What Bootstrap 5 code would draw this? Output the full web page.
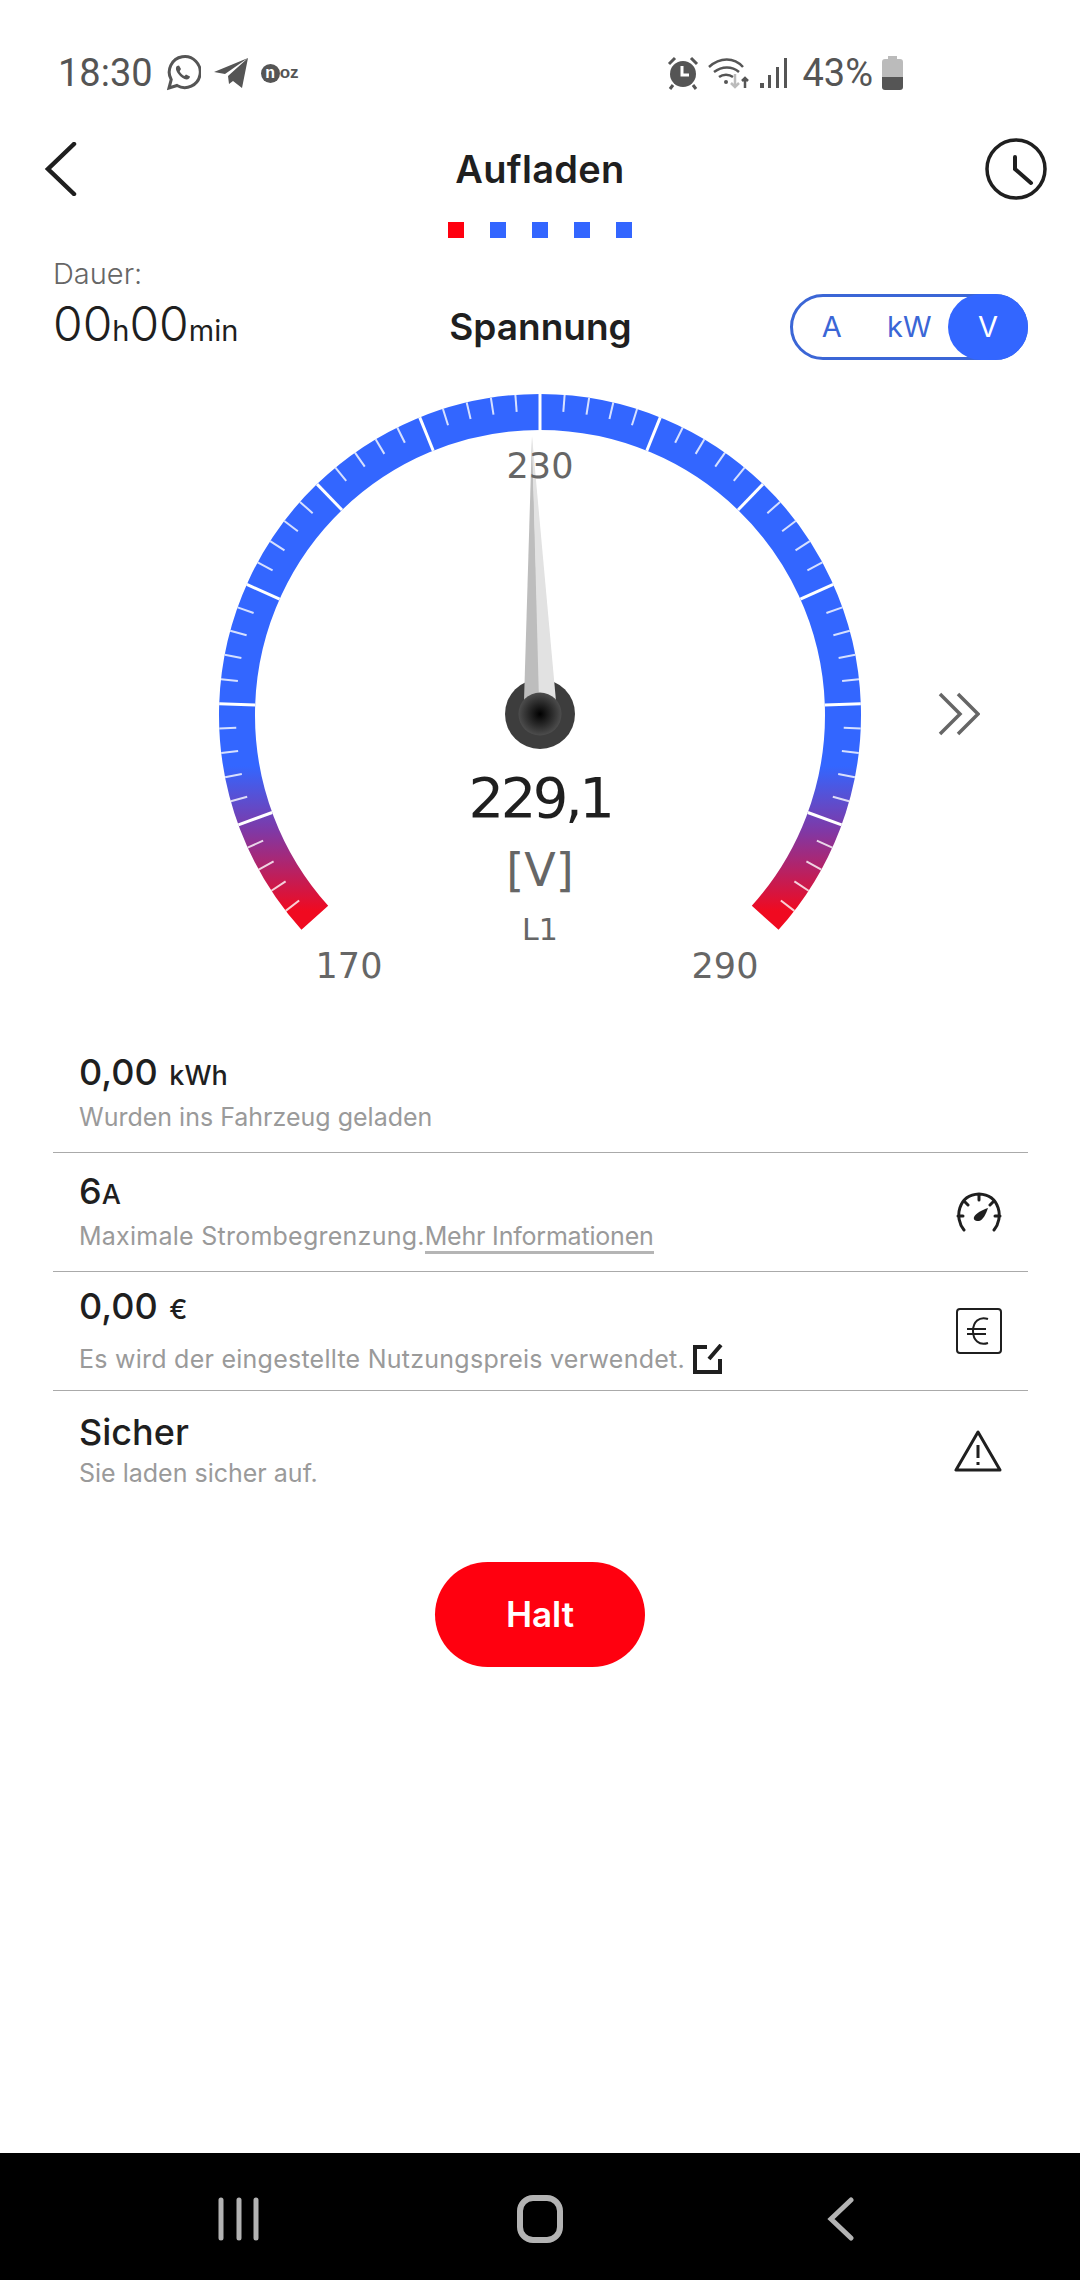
<!DOCTYPE html>
<html lang="de">
<head>
  <meta charset="UTF-8" />
  <meta name="viewport" content="width=device-width, initial-scale=1.0" />
  <title>Aufladen</title>
  <link href="https://cdn.jsdelivr.net/npm/bootstrap@5.3.0/dist/css/bootstrap.min.css" rel="stylesheet">
  <style>
    body {
      font-family: 'Inter', sans-serif;
      background-color: #fff;
      color: #1f1f1f;
      width: 1080px;
      height: 2280px;
      overflow: hidden;
    }
    .phone {
      height: 2280px;
    }
    .status-bar {
      height: 72px;
      margin-top: 37px;
      padding: 0 177px 0 58px;
      font-family: 'Roboto', sans-serif;
      font-size: 38px;
      color: #555;
    }
    .status-left {
      gap: 12px;
    }
    .status-right {
      gap: 9px;
    }
    .noz-logo {
      font-family: 'Liberation Sans', sans-serif;
      font-weight: 700;
      font-size: 17px;
      color: #555;
    }
    .noz-logo b {
      display: inline-flex;
      width: 19px;
      height: 19px;
      border-radius: 50%;
      background: #555;
      color: #fff;
      align-items: center;
      justify-content: center;
      font-size: 16px;
    }
    .top-bar {
      height: 90px;
      margin-top: 15px;
      padding: 0 33px 0 44px;
    }
    .top-slot {
      width: 80px;
    }
    .top-slot.slot-end {
      width: 91px;
    }
    .page-title {
      font-size: 38px;
      font-weight: 600;
      letter-spacing: .3px;
    }
    .step-dot {
      width: 16px;
      height: 16px;
      background: #3366ff;
    }
    .step-dot.active-step {
      background: #ff000f;
    }
    .dot-row {
      gap: 26px;
    }
    .info-bar {
      padding: 6px 52px 0 53px;
      height: 131px;
      margin-top: 12px;
    }
    .info-col {
      width: 238px;
    }
    .dauer-label {
      font-size: 29px;
      line-height: 36px;
      color: #666;
      font-weight: 300;
    }
    .dauer-time {
      font-size: 48px;
      line-height: 64px;
      font-weight: 300;
    }
    .dauer-time small {
      font-size: 29px;
      font-weight: 400;
    }
    .gauge-title {
      margin-top: 38px;
      line-height: 66px;
      font-size: 37px;
      font-weight: 600;
    }
    .unit-switch {
      margin-top: 38px;
      width: 238px;
      height: 66px;
      border: 3px solid #3b66d6;
      font-size: 29px;
      color: #3b66d6;
    }
    .unit-opt {
      flex: 1;
    }
    .unit-opt.unit-on {
      background: #3366ff;
      color: #fff;
      flex: 0 0 80px;
      height: 66px;
      margin: -3px -3px -3px 0;
    }
    .gauge-box {
      height: 640px;
    }
    .gauge-text {
      position: absolute;
      transform: translate(-50%, -50%);
      font-family: 'DejaVu Sans', sans-serif;
      color: #666;
      line-height: 1;
      white-space: nowrap;
    }
    .gauge-scale { font-size: 35px; }
    .gauge-value { font-size: 56px; letter-spacing: -3.500px; color: #1f1f1f; }
    .gauge-unit { font-size: 46px; }
    .gauge-phase { font-size: 30px; }
    .gauge-next {
      position: absolute;
      left: 938px;
      top: 311px;
    }
    .data-list {
      padding: 0 52px 0 53px;
      margin-top: 13px;
    }
    .data-row {
      height: 119px;
      padding: 0 26px;
      border-bottom: 1px solid #aaa;
    }
    .data-row:last-child {
      border-bottom: 0;
    }
    .data-value {
      font-size: 36px;
      line-height: 44px;
      font-weight: 500;
    }
    .data-value small {
      font-size: 27px;
      margin-left: 2px;
    }
    .data-value small.tight {
      margin-left: 0;
    }
    .data-sub {
      font-size: 25px;
      line-height: 38px;
      color: #9a9a9a;
    }
    .data-sub.sub-wide {
      letter-spacing: .25px;
    }
    .more-link {
      color: #9a9a9a;
      letter-spacing: -.2px;
      border-bottom: 3px solid #b5b5b5;
    }
    .halt-wrap {
      margin-top: 52px;
    }
    .halt-btn {
      width: 210px;
      height: 105px;
      background: #ff000f;
      color: #fff;
      border: 0;
      font-size: 35px;
      font-weight: 600;
    }
    .nav-bar {
      height: 127px;
      padding-top: 4px;
      background: #000;
      margin-top: auto;
    }
    .nav-slot {
      width: 301px;
    }
  </style>
</head>
<body>
<div class="phone d-flex flex-column">

  <div class="status-bar d-flex align-items-center justify-content-between">
    <div class="status-left d-flex align-items-center">
      <span>18:30</span>
      <svg width="36" height="36" viewBox="0 0 36 36" fill="none" stroke="#555" stroke-width="3"><path d="M4 33l2.200-8.400A15.500 15.500 0 1 1 12 30.500z"/><path d="M12 11c-1.500 1.500-1.500 4 1 7.500s6 6 8.500 6c2 0 3.500-1.500 3.500-3l-4-2-1.500 1.500c-2-.8-4-3-4.800-4.800L16 14l-2-3.500z" fill="#555" stroke="none"/></svg>
      <svg width="36" height="32" viewBox="0 0 36 32"><path d="M35 1L29 31l-9-7-4 3-1-8zM1 15L35 1 12 17z" fill="#555"/></svg>
      <span class="noz-logo d-flex align-items-center"><b>n</b>oz</span>
    </div>
    <div class="status-right d-flex align-items-center">
      <svg width="32" height="34" viewBox="0 0 32 34"><circle cx="16" cy="18" r="13" fill="#555"/><path d="M15 10v9h7" fill="none" stroke="#fff" stroke-width="3"/><path d="M2 8l6-6M30 8l-6-6M6 29l-3 4M26 29l3 4" stroke="#555" stroke-width="3"/></svg>
      <svg width="42" height="34" viewBox="0 0 42 34" fill="none" stroke="#555" stroke-width="2.500"><path d="M1 11c11-10 25-10 34 0M6 16c8-6 18-6 25 0M11 21c4-3 10-3 14 0"/><circle cx="18" cy="26" r="2" fill="#555" stroke="none"/><path d="M27 18v13M23 27l4 4 4-4" stroke="#bbb"/><path d="M37 32V22M34 25l3-3 3 3"/></svg>
      <svg width="30" height="32" viewBox="0 0 30 32" fill="#555"><rect x="1" y="26" width="4" height="5"/><rect x="9" y="18" width="3" height="13"/><rect x="17" y="10" width="3" height="21"/><rect x="25" y="1" width="3" height="30"/></svg>
      <span class="ms-1">43%</span>
      <svg width="21" height="34" viewBox="0 0 21 34"><path d="M6 0h9v3h3a3 3 0 0 1 3 3v19H0V6a3 3 0 0 1 3-3h3z" fill="#bbb"/><path d="M0 21h21v10a3 3 0 0 1-3 3H3a3 3 0 0 1-3-3z" fill="#555"/></svg>
    </div>
  </div>

  <div class="top-bar d-flex align-items-center justify-content-between">
    <div class="top-slot d-flex">
      <svg width="34" height="54" viewBox="0 0 34 54" fill="none" stroke="#1f1f1f" stroke-width="4.500" stroke-linecap="round"><path d="M30 2L4 27l26 25"/></svg>
    </div>
    <div class="page-title">Aufladen</div>
    <div class="top-slot slot-end d-flex justify-content-end">
      <svg width="62" height="62" viewBox="0 0 62 62" fill="none" stroke="#1f1f1f" stroke-width="3.500"><circle cx="31" cy="31" r="29"/><path d="M30 19v12l16 14" stroke-linecap="round" stroke-width="4"/></svg>
    </div>
  </div>

  <div class="dot-row d-flex justify-content-center mt-2">
    <span class="step-dot active-step"></span>
    <span class="step-dot"></span>
    <span class="step-dot"></span>
    <span class="step-dot"></span>
    <span class="step-dot"></span>
  </div>

  <div class="info-bar d-flex align-items-start justify-content-between">
    <div class="info-col">
      <div class="dauer-label">Dauer:</div>
      <div class="dauer-time">00<small>h</small>00<small>min</small></div>
    </div>
    <div class="gauge-title">Spannung</div>
    <div class="unit-switch d-flex align-items-center rounded-pill">
      <span class="unit-opt text-center">A</span>
      <span class="unit-opt text-center">kW</span>
      <span class="unit-opt unit-on rounded-pill d-flex align-items-center justify-content-center">V</span>
    </div>
  </div>

  <div class="gauge-box position-relative">
    <svg id="gauge" width="1080" height="640" viewBox="0 0 1080 640">
      <defs>
        <linearGradient id="ringFill" gradientUnits="userSpaceOnUse" x1="0" y1="385" x2="0" y2="530">
          <stop offset="0" stop-color="#3366ff"/>
          <stop offset="0.45" stop-color="#8038a5"/>
          <stop offset="1" stop-color="#f00a20"/>
        </linearGradient>
        <radialGradient id="hubFill">
          <stop offset="0" stop-color="#000"/>
          <stop offset="1" stop-color="#4d4d4d"/>
        </radialGradient>
      </defs>
      <path id="ring" fill="none" stroke="url(#ringFill)" stroke-width="36"/>
      <g id="ticks" stroke="#fff"></g>
      <circle cx="540" cy="333" r="35" fill="#3d3d3d"/>
      <path d="M532 55L524 320h16z" fill="#bdbdbd"/>
      <path d="M532 55L539 320h17z" fill="#e2e2e2"/>
      <circle cx="540" cy="333" r="21.500" fill="url(#hubFill)"/>
    </svg>
    <span class="gauge-text gauge-scale" style="left:540px;top:85px">230</span>
    <span class="gauge-text gauge-value" style="left:540px;top:417px">229,1</span>
    <span class="gauge-text gauge-unit" style="left:540px;top:489px">[V]</span>
    <span class="gauge-text gauge-phase" style="left:540px;top:549px">L1</span>
    <span class="gauge-text gauge-scale" style="left:349px;top:585px">170</span>
    <span class="gauge-text gauge-scale" style="left:725px;top:585px">290</span>
    <svg class="gauge-next" width="42" height="44" viewBox="0 0 42 44" fill="none" stroke="#666" stroke-width="3.500"><path d="M2 2l20 20L2 42M20 2l20 20-20 20"/></svg>
  </div>

  <div class="data-list">
    <div class="data-row d-flex align-items-center justify-content-between">
      <div>
        <div class="data-value">0,00 <small>kWh</small></div>
        <div class="data-sub">Wurden ins Fahrzeug geladen</div>
      </div>
    </div>
    <div class="data-row d-flex align-items-center justify-content-between">
      <div>
        <div class="data-value">6<small class="tight">A</small></div>
        <div class="data-sub sub-wide">Maximale Strombegrenzung.<a class="more-link text-decoration-none" href="#">Mehr Informationen</a></div>
      </div>
      <svg width="46" height="40" viewBox="0 0 46 40" fill="none" stroke="#1f1f1f" stroke-width="3"><path d="M8 38C-2 26 2 3 23 2c21 1 25 24 15 36M23 2v6M8 9l4 4M38 9l-4 4M2 24h5M44 24h-5" stroke-linecap="round"/><path d="M18 25c2-4 8-7 14-9-2 6-5 12-9 13-3 .5-6-1-5-4z" fill="#1f1f1f" stroke="none"/></svg>
    </div>
    <div class="data-row d-flex align-items-center justify-content-between">
      <div>
        <div class="data-value">0,00 <small>€</small></div>
        <div class="data-sub sub-wide d-flex align-items-center gap-2 mt-2">Es wird der eingestellte Nutzungspreis verwendet.
          <svg width="30" height="30" viewBox="0 0 30 30" fill="none" stroke="#1f1f1f" stroke-width="4"><path d="M14 3H2v25h25V15M16 15L28 1"/></svg>
        </div>
      </div>
      <svg width="46" height="46" viewBox="0 0 46 46" fill="none" stroke="#1f1f1f" stroke-width="2"><rect x="1" y="1" width="44" height="44" rx="3"/><path d="M32 11c-9-3-15 3-15 12s6 15 15 12M11 21h19M11 26h19"/></svg>
    </div>
    <div class="data-row d-flex align-items-center justify-content-between">
      <div>
        <div class="data-value">Sicher</div>
        <div class="data-sub">Sie laden sicher auf.</div>
      </div>
      <svg width="48" height="44" viewBox="0 0 48 44" fill="none" stroke="#1f1f1f" stroke-width="3" stroke-linejoin="round"><path d="M24 3L2 41h44z"/><path d="M24 16v13M24 33v3"/></svg>
    </div>
  </div>

  <div class="halt-wrap text-center">
    <button class="btn halt-btn rounded-pill">Halt</button>
  </div>

  <div class="nav-bar d-flex align-items-center justify-content-center">
    <div class="nav-slot text-center">
      <svg width="44" height="44" viewBox="0 0 44 44" stroke="#b3b3b3" stroke-width="5" stroke-linecap="round"><path d="M4 3v38M22 3v38M39 3v38"/></svg>
    </div>
    <div class="nav-slot text-center">
      <svg width="46" height="48" viewBox="0 0 46 48" fill="none" stroke="#b3b3b3" stroke-width="6"><rect x="3" y="3" width="40" height="42" rx="13"/></svg>
    </div>
    <div class="nav-slot text-center">
      <svg width="28" height="44" viewBox="0 0 28 44" fill="none" stroke="#b3b3b3" stroke-width="5" stroke-linecap="round"><path d="M24 3L4 22l20 19"/></svg>
    </div>
  </div>
</div>

<script src="https://cdn.jsdelivr.net/npm/bootstrap@5.3.0/dist/js/bootstrap.bundle.min.js"></script>
<script>
  // gauge ring and ticks: 60 steps of 4.4deg, every fifth one is a long tick
  const cx = 540, cy = 334, outerR = 321, innerR = 285;
  const point = (deg, r) => {
    const a = deg * Math.PI / 180;
    return [cx + r * Math.sin(a), cy - r * Math.cos(a)];
  };
  const midR = (outerR + innerR) / 2;
  const [sx, sy] = point(-132, midR);
  const [ex, ey] = point(132, midR);
  document.getElementById('ring').setAttribute('d', `M${sx} ${sy}A${midR} ${midR} 0 1 1 ${ex} ${ey}`);

  let ticks = '';
  for (let i = -29; i <= 29; i++) {
    const major = i % 5 === 0;
    const [x1, y1] = point(i * 4.4, outerR);
    const [x2, y2] = point(i * 4.4, major ? innerR : outerR - 17);
    ticks += `<line x1="${x1}" y1="${y1}" x2="${x2}" y2="${y2}" stroke-width="${major ? 3 : 2}" stroke-opacity="${major ? 1 : 0.8}"/>`;
  }
  document.getElementById('ticks').innerHTML = ticks;
</script>
</body>
</html>
